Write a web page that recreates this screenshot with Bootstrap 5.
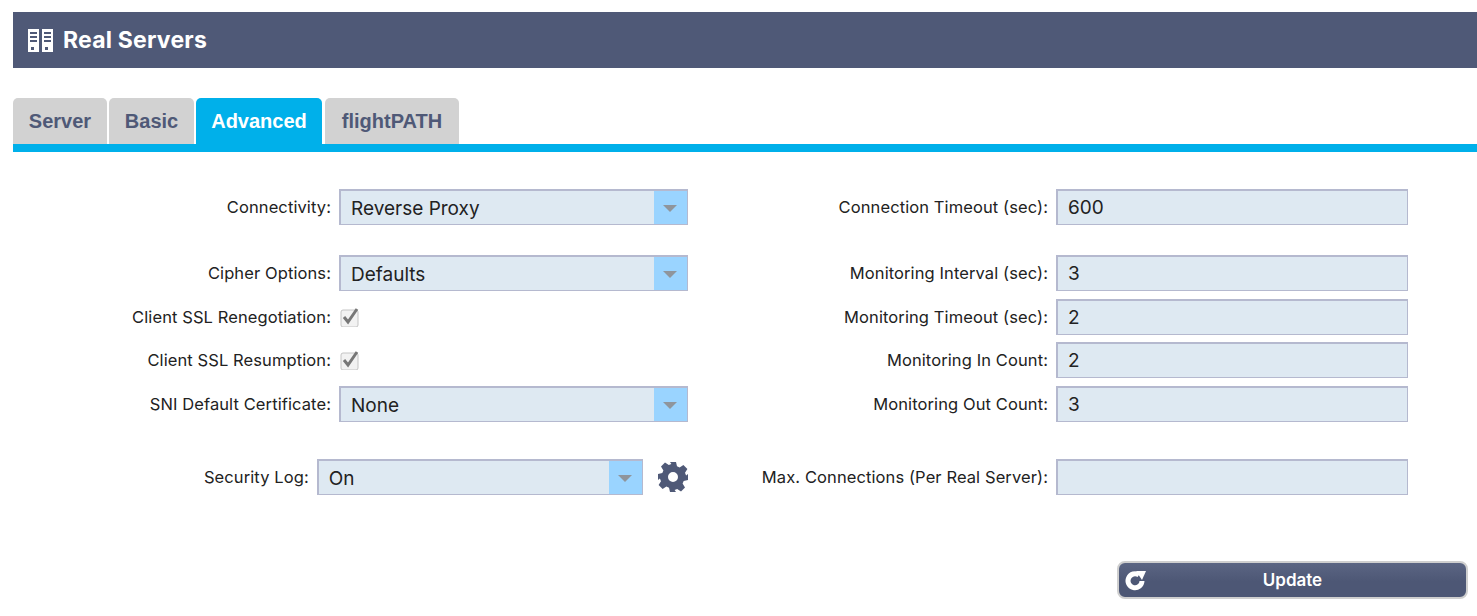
<!DOCTYPE html>
<html lang="en">
<head>
<meta charset="utf-8">
<title>Real Servers</title>
<link rel="stylesheet" href="https://cdn.jsdelivr.net/npm/bootstrap@5.3.0/dist/css/bootstrap.min.css">
<style>
body{background:#fff;overflow:hidden;font-family:"Inter","Open Sans",sans-serif;color:#222}
.page-wrap{padding:12px 0 0 13px}
.banner{height:56px;background:#4f5977;color:#fff;padding-left:15px;gap:10px}
.banner-title{font-size:23px;font-weight:700;letter-spacing:.2px;margin:0;line-height:1}
.tab-strip{margin-top:30px;border-bottom:8px solid #00b0ea;gap:2px}
.tab-item{height:46px;background:#d2d2d2;color:#4f5977;font:700 20px/46px "Liberation Sans",sans-serif;border-radius:5px 5px 0 0;text-align:center;text-decoration:none}
.tab-item:hover{color:#4f5977}
.tab-item.is-on{background:#00b0ea;color:#fff}
.t1{width:94px}.t2{width:85px}.t3{width:126px;margin-right:1px}.t4{width:134px}
.form-area{margin-top:37px}
.field-row{height:36px;margin-bottom:8px}
.gap-big{margin-bottom:30px}
.gap-huge{margin-bottom:37px}
.gap-small{margin-bottom:7px}
.left-side{width:675px}
.right-side{width:735px;margin-left:45px}
.lbl{font-size:16.5px;line-height:36px;white-space:nowrap;text-align:right;margin:0 8px 0 0;letter-spacing:.1px}
.left-side .lbl{width:318px}
.right-side .lbl{width:315px}
.txt-box,.sel-box{height:36px;background:#dee9f2;border:2px solid #b5b9cf;border-width:2px 1px 1px 2px;font-size:19px;color:#222;padding:0 10px;border-radius:0;outline:0}
.txt-box{width:352px;font-family:inherit}
.sel-box{width:349px;position:relative;line-height:35px}
.sel-arrow{position:absolute;top:0;right:0;bottom:0;width:33px;background:#9ad4ff}
.sel-arrow::after{content:"";position:absolute;left:9px;top:14px;border:7px solid transparent;border-top-color:#8f959c;border-bottom:0}
.chk-box{width:20px;height:20px;margin-left:1px}
.gear{margin-left:15px;width:30px;height:30px}
.btn-row{margin-top:66px;margin-left:1104px}
.upd-btn{width:351px;height:38px;position:relative;border:2px solid #cfcfcf;border-radius:8px;background:linear-gradient(#5b6583,#4d5775 55%,#4d5775);color:#fff;font-size:17px;font-weight:600;padding:0;line-height:32px}
.upd-btn:hover,.upd-btn:active{background:#4f5977;color:#fff;border-color:#cfcfcf}
.upd-ico{position:absolute;left:5px;top:6px;width:24px;height:24px}
</style>
</head>
<body>
<div class="page-wrap">
  <div class="banner d-flex align-items-center">
    <svg width="25" height="25" viewBox="0 0 25 25" aria-hidden="true"><g fill="#fff"><path d="M0 1h11v23H0zM14 1h11v23H14z"/></g><g fill="#4f5977"><path d="M2 4h7v2H2zM2 8h7v2H2zM2 12h7v2H2zM16 4h7v2h-7zM16 8h7v2h-7zM16 12h7v2h-7zM3 19h3v3H3zM17 19h3v3h-3z"/></g></svg>
    <h1 class="banner-title">Real Servers</h1>
  </div>

  <div class="tab-strip d-flex">
    <a class="tab-item t1" href="#">Server</a>
    <a class="tab-item t2" href="#">Basic</a>
    <a class="tab-item t3 is-on" href="#">Advanced</a>
    <a class="tab-item t4" href="#">flightPATH</a>
  </div>

  <div class="form-area">
    <div class="field-row gap-big d-flex">
      <div class="left-side d-flex"><label class="lbl">Connectivity:</label><div class="sel-box">Reverse Proxy<span class="sel-arrow"></span></div></div>
      <div class="right-side d-flex"><label class="lbl">Connection Timeout (sec):</label><input class="txt-box" value="600"></div>
    </div>
    <div class="field-row d-flex">
      <div class="left-side d-flex"><label class="lbl">Cipher Options:</label><div class="sel-box">Defaults<span class="sel-arrow"></span></div></div>
      <div class="right-side d-flex"><label class="lbl">Monitoring Interval (sec):</label><input class="txt-box" value="3"></div>
    </div>
    <div class="field-row gap-small d-flex">
      <div class="left-side d-flex align-items-center"><label class="lbl">Client SSL Renegotiation:</label>
        <svg class="chk-box" viewBox="0 0 20 20" aria-hidden="true"><rect x="1" y="3" width="17" height="17" rx="2" fill="#f2f2f2" stroke="#c4c4c4"/><path d="M4 10l4 5 9-13" fill="none" stroke="#777" stroke-width="3"/></svg></div>
      <div class="right-side d-flex"><label class="lbl">Monitoring Timeout (sec):</label><input class="txt-box" value="2"></div>
    </div>
    <div class="field-row d-flex">
      <div class="left-side d-flex align-items-center"><label class="lbl">Client SSL Resumption:</label>
        <svg class="chk-box" viewBox="0 0 20 20" aria-hidden="true"><rect x="1" y="3" width="17" height="17" rx="2" fill="#f2f2f2" stroke="#c4c4c4"/><path d="M4 10l4 5 9-13" fill="none" stroke="#777" stroke-width="3"/></svg></div>
      <div class="right-side d-flex"><label class="lbl">Monitoring In Count:</label><input class="txt-box" value="2"></div>
    </div>
    <div class="field-row gap-huge d-flex">
      <div class="left-side d-flex"><label class="lbl">SNI Default Certificate:</label><div class="sel-box">None<span class="sel-arrow"></span></div></div>
      <div class="right-side d-flex"><label class="lbl">Monitoring Out Count:</label><input class="txt-box" value="3"></div>
    </div>
    <div class="field-row d-flex">
      <div class="left-side d-flex align-items-center"><label class="lbl">Security Log:</label><div class="sel-box">On<span class="sel-arrow"></span></div>
        <svg class="gear flex-shrink-0" viewBox="0 0 30 30" aria-hidden="true"><path fill="#4f5977" fill-rule="evenodd" d="M12 0h6l1 4.300 2.600 1.100L25.400 3l4 4-2.400 3.800 1.100 2.600L30 12v6l-4.300 1-1.100 2.600 2.400 3.800-4 4-3.800-2.400-2.600 1.100L18 30h-6l-1-4.300-2.600-1.100L4.600 27l-4-4L3 19.200 1.900 16.600 0 18v-6l4.300-1 1.100-2.600L3 4.600l4-4 3.800 2.400 2.600-1.100zM15 10a5 5 0 1 0 0 10 5 5 0 0 0 0-10z"/></svg>
      </div>
      <div class="right-side d-flex"><label class="lbl">Max. Connections (Per Real Server):</label><input class="txt-box" value=""></div>
    </div>
  </div>

  <div class="btn-row">
    <button type="button" class="btn upd-btn">
      <svg class="upd-ico" viewBox="0 0 24 24" aria-hidden="true"><path fill="none" stroke="#fff" stroke-width="5" d="M15 6a7 7 0 1 0 3 6"/><path fill="#fff" d="M12 2h10l-4 9z"/></svg>
      Update
    </button>
  </div>
</div>
<script src="https://cdn.jsdelivr.net/npm/bootstrap@5.3.0/dist/js/bootstrap.bundle.min.js"></script>
</body>
</html>
